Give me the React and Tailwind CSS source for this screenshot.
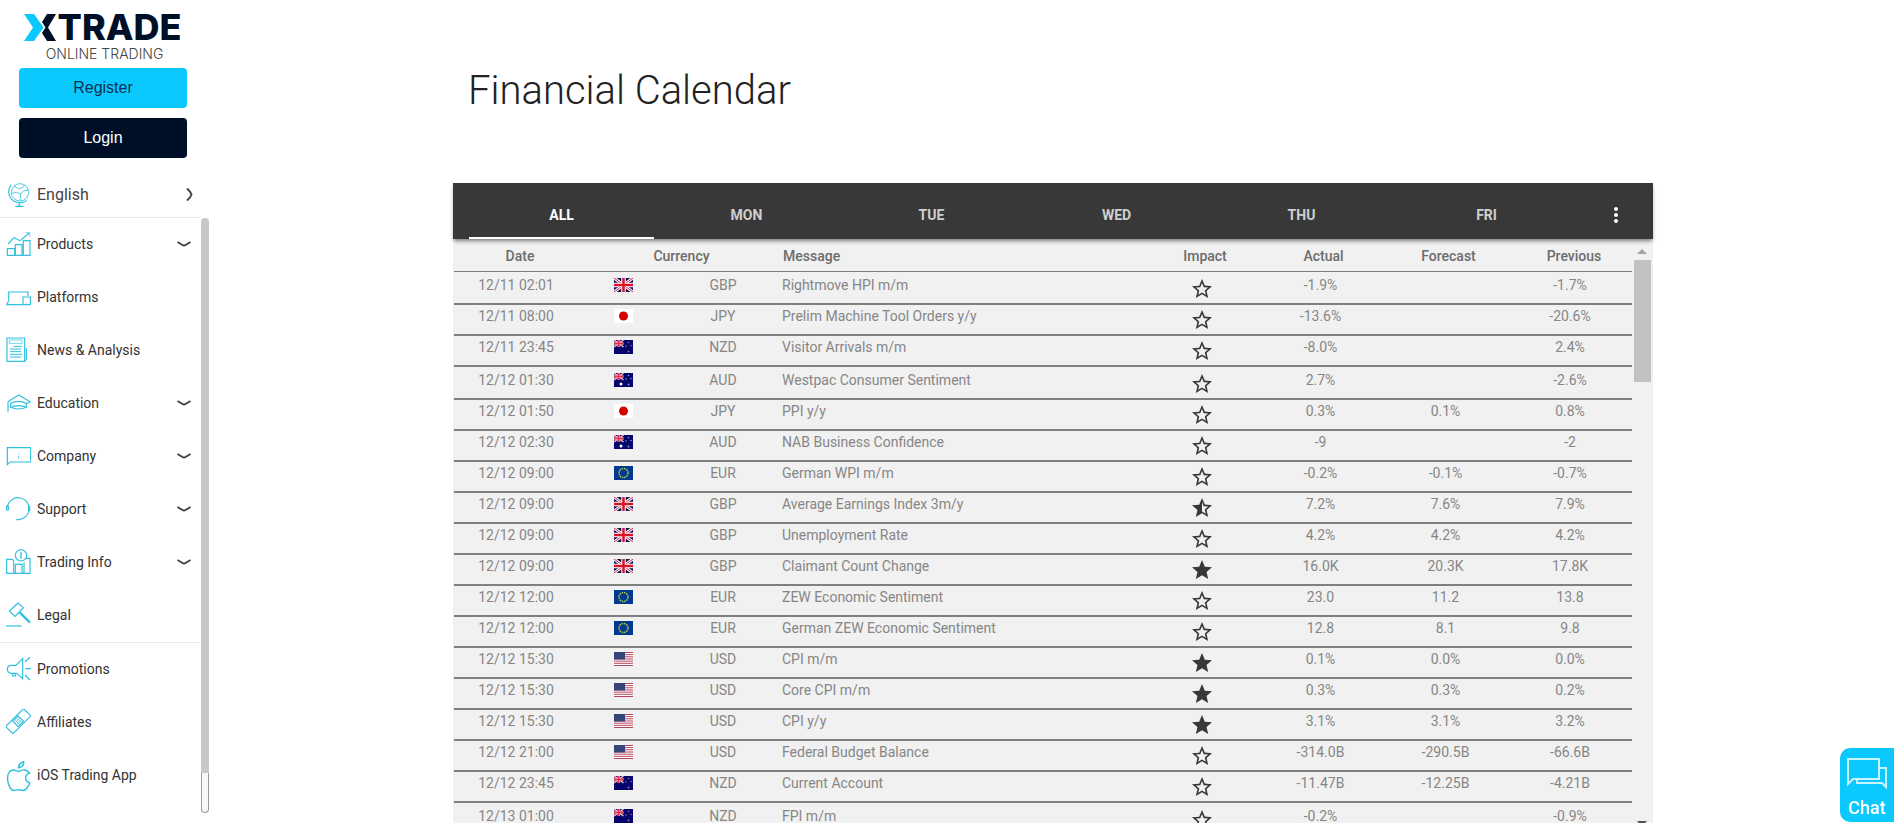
import { useState } from 'react';
import { MdStar, MdStarHalf, MdStarBorder, MdMoreVert } from 'react-icons/md';

const TABS = ['ALL', 'MON', 'TUE', 'WED', 'THU', 'FRI'];

const EVENTS = [
    { date: '12/11', time: '02:01', currency: 'GBP', message: 'Rightmove HPI m/m', impact: 1, actual: '-1.9%', forecast: '', previous: '-1.7%' },
    { date: '12/11', time: '08:00', currency: 'JPY', message: 'Prelim Machine Tool Orders y/y', impact: 1, actual: '-13.6%', forecast: '', previous: '-20.6%' },
    { date: '12/11', time: '23:45', currency: 'NZD', message: 'Visitor Arrivals m/m', impact: 1, actual: '-8.0%', forecast: '', previous: '2.4%' },
    { date: '12/12', time: '01:30', currency: 'AUD', message: 'Westpac Consumer Sentiment', impact: 1, actual: '2.7%', forecast: '', previous: '-2.6%' },
    { date: '12/12', time: '01:50', currency: 'JPY', message: 'PPI y/y', impact: 1, actual: '0.3%', forecast: '0.1%', previous: '0.8%' },
    { date: '12/12', time: '02:30', currency: 'AUD', message: 'NAB Business Confidence', impact: 1, actual: '-9', forecast: '', previous: '-2' },
    { date: '12/12', time: '09:00', currency: 'EUR', message: 'German WPI m/m', impact: 1, actual: '-0.2%', forecast: '-0.1%', previous: '-0.7%' },
    { date: '12/12', time: '09:00', currency: 'GBP', message: 'Average Earnings Index 3m/y', impact: 2, actual: '7.2%', forecast: '7.6%', previous: '7.9%' },
    { date: '12/12', time: '09:00', currency: 'GBP', message: 'Unemployment Rate', impact: 1, actual: '4.2%', forecast: '4.2%', previous: '4.2%' },
    { date: '12/12', time: '09:00', currency: 'GBP', message: 'Claimant Count Change', impact: 3, actual: '16.0K', forecast: '20.3K', previous: '17.8K' },
    { date: '12/12', time: '12:00', currency: 'EUR', message: 'ZEW Economic Sentiment', impact: 1, actual: '23.0', forecast: '11.2', previous: '13.8' },
    { date: '12/12', time: '12:00', currency: 'EUR', message: 'German ZEW Economic Sentiment', impact: 1, actual: '12.8', forecast: '8.1', previous: '9.8' },
    { date: '12/12', time: '15:30', currency: 'USD', message: 'CPI m/m', impact: 3, actual: '0.1%', forecast: '0.0%', previous: '0.0%' },
    { date: '12/12', time: '15:30', currency: 'USD', message: 'Core CPI m/m', impact: 3, actual: '0.3%', forecast: '0.3%', previous: '0.2%' },
    { date: '12/12', time: '15:30', currency: 'USD', message: 'CPI y/y', impact: 3, actual: '3.1%', forecast: '3.1%', previous: '3.2%' },
    { date: '12/12', time: '21:00', currency: 'USD', message: 'Federal Budget Balance', impact: 1, actual: '-314.0B', forecast: '-290.5B', previous: '-66.6B' },
    { date: '12/12', time: '23:45', currency: 'NZD', message: 'Current Account', impact: 1, actual: '-11.47B', forecast: '-12.25B', previous: '-4.21B' },
    { date: '12/13', time: '01:00', currency: 'NZD', message: 'FPI m/m', impact: 1, actual: '-0.2%', forecast: '', previous: '-0.9%' },
];

// Line icons share a 75 unit grid
const Icon = ({ children }) => (
    <svg viewBox="0 0 75 75" className="h-[25px] w-[25px] shrink-0" fill="none" stroke="#2fc0de" strokeWidth="3.5" aria-hidden="true">
        {children}
    </svg>
);

const ProductsIcon = () => (
    <Icon>
        <path d="M4 53h22v20H4zM28 41h20v32H28zM52 29h20v44H52z" />
        <path d="M6 39 24 20l18 9L70 6" />
        <path d="M58 5h13v11" strokeWidth="2" />
    </Icon>
);

const PlatformsIcon = () => (
    <Icon>
        <path d="M8 50V24h58v12" />
        <path d="M8 50 2 62h48" />
        <path d="M51 39h22v23H51zM58 61h8" />
    </Icon>
);

const NewsIcon = () => (
    <Icon>
        <path d="M3 3h53v70H3z" />
        <path d="M56 36h5v30l-5 7" />
        <path d="M10 9h38v10H10z" strokeWidth="2" />
        <path d="M22 28h26M12 36h34M12 44h34M12 52h36M12 60h34" strokeWidth="3" />
    </Icon>
);

const EducationIcon = () => (
    <Icon>
        <path d="m6 35 32-20 35 21-12 5" />
        <path d="M14 40q24-12 47 0v12q-23 10-47 0z" />
        <path d="M14 52q24-10 47 0" />
        <path d="M6 35v32" />
    </Icon>
);

const CompanyIcon = () => (
    <Icon>
        <path d="M4 14h70v43H12l-8 8z" />
        <path d="M38 30v4M38 38v10" strokeWidth="3" opacity="0.7" />
    </Icon>
);

const SupportIcon = () => (
    <Icon>
        <path d="M4 32a33 33 0 1 1 34 39h-7" />
        <path d="M2 31h5v11H2z" />
        <path d="M68 32h3v12h-3z" />
    </Icon>
);

const TradingInfoIcon = () => (
    <Icon>
        <circle cx="45" cy="19" r="17" />
        <path d="M45 9v20" strokeWidth="4" />
        <path d="M2 73V31h17l4 5v37zM28 73V46h20v27M54 73V40M60 28h12v45H2" />
    </Icon>
);

const LegalIcon = () => (
    <Icon>
        <path d="M10 27 36 3l16 14-25 26z" />
        <path d="m41 31 31 31" strokeWidth="7" />
        <path d="M0 72h47" />
    </Icon>
);

const PromotionsIcon = () => (
    <Icon>
        <path d="M50 7v61L32 52H14q-10-3-10-14 1-9 10-10h16z" />
        <path d="M20 52v8h8v-8" />
        <path d="m57 17 15-13M58 38h17M57 57l15 15" strokeWidth="4" />
    </Icon>
);

const AffiliatesIcon = () => (
    <Icon>
        <g transform="rotate(-45 37 37)">
            <rect x="-1" y="21" width="76" height="31" rx="3" />
            <rect x="25" y="25" width="23" height="23" />
            <path d="M33 25v23M41 25v23M25 33h23M25 41h23" strokeWidth="2" />
        </g>
    </Icon>
);

const AppleIcon = () => (
    <svg viewBox="3 1 17 21" className="mt-1 h-[31px] w-[25px] shrink-0" fill="none" stroke="#2fc0de" strokeWidth="1" aria-hidden="true">
        <path d="M8.286 7.008C5.07 7.008 4 10.238 4 12.928 4 16.157 6.143 21 8.286 21c1.165-.05 1.799-.538 3.214-.538 1.406 0 1.607.538 3.214.538S19 17.771 19 15.619c-.03-.011-2.649-.434-2.679-3.23-.02-2.335 2.589-3.179 2.679-3.228-1.096-1.606-3.162-2.113-3.75-2.153-1.535-.12-3.032 1.077-3.75 1.077-.729 0-2.036-1.077-3.214-1.077z" />
        <path d="M11.5 5.5q0-3 3.500-4 .3 3.600-3.500 4z" />
    </svg>
);

const GlobeIcon = () => (
    <Icon>
        <circle cx="42" cy="31" r="26" strokeWidth="2.5" />
        <path d="M16 8a33 33 0 0 0 46 47M40 65v8M28 73h24" />
        <path d="M24 12l14 8 12-3 6-9M18 34l14-3 12 6-2 19M66 24l-14 3-8 10" strokeWidth="2.5" />
    </Icon>
);

const MENU = [
    { label: 'Products', icon: ProductsIcon, expandable: true },
    { label: 'Platforms', icon: PlatformsIcon },
    { label: 'News & Analysis', icon: NewsIcon },
    { label: 'Education', icon: EducationIcon, expandable: true },
    { label: 'Company', icon: CompanyIcon, expandable: true },
    { label: 'Support', icon: SupportIcon, expandable: true },
    { label: 'Trading Info', icon: TradingInfoIcon, expandable: true },
    { label: 'Legal', icon: LegalIcon },
];

const EXTRA_MENU = [
    { label: 'Promotions', icon: PromotionsIcon },
    { label: 'Affiliates', icon: AffiliatesIcon },
    { label: 'iOS Trading App', icon: AppleIcon },
];

const UnionJack = () => (
    <>
        <path fill="#0b1560" d="M0 0h38v28H0z" />
        <path stroke="#fff" strokeWidth="6" d="m0 0 38 28M38 0 0 28" />
        <path stroke="#d8142c" strokeWidth="2" d="m0 0 38 28M38 0 0 28" />
        <path stroke="#fff" strokeWidth="9" d="M19 0v28M0 14h38" />
        <path stroke="#d8142c" strokeWidth="5" d="M19 0v28M0 14h38" />
    </>
);

const SouthernFlag = ({ starColor, children }) => (
    <>
        <path fill="#05056e" d="M0 0h38v28H0z" />
        <path stroke="#f3b6c0" strokeWidth="3" d="m0 0 19 14M19 0 0 14" />
        <path stroke="#f3b6c0" strokeWidth="5" d="M9.500 0v14M0 7h19" />
        <path stroke="#e0304a" strokeWidth="3" d="M9.500 0v14M0 7h19" />
        <g fill={starColor}>
            <circle cx="29" cy="5" r="1.500" />
            <circle cx="24" cy="12" r="1.500" />
            <circle cx="34" cy="11" r="1.500" />
            <circle cx="29" cy="23" r="1.800" />
        </g>
        {children}
    </>
);

const FLAGS = {
    GBP: <UnionJack />,
    JPY: (
        <>
            <path fill="#fff" d="M0 0h38v28H0z" />
            <circle cx="19" cy="14" r="9" fill="#d90000" />
        </>
    ),
    NZD: <SouthernFlag starColor="#b06a9c" />,
    AUD: (
        <SouthernFlag starColor="#9aa0d8">
            <circle cx="14" cy="22" r="3" fill="#fff" />
        </SouthernFlag>
    ),
    EUR: (
        <>
            <path fill="#003a8f" d="M0 0h38v28H0z" />
            <circle cx="19" cy="14" r="9" fill="none" stroke="#b5c95a" strokeWidth="3" strokeDasharray="3 1.700" />
        </>
    ),
    USD: (
        <>
            <path fill="#fff" d="M0 0h38v28H0z" />
            <path stroke="#b8455c" strokeWidth="2" d="M0 1h38M0 5.300h38M0 9.600h38M0 14h38M0 18.300h38M0 22.600h38M0 27h38" />
            <path fill="#35457a" d="M0 0h22v15H0z" />
        </>
    ),
};

const Flag = ({ currency }) => (
    <svg viewBox="0 0 38 28" className="mx-auto h-3.5 w-[19px]" preserveAspectRatio="none" fill="none" aria-hidden="true">
        {FLAGS[currency]}
    </svg>
);

const Impact = ({ level }) => {
    const Star = level === 3 ? MdStar : level === 2 ? MdStarHalf : MdStarBorder;
    return <Star className="mx-auto -mt-px mb-px size-6 text-[#383838]" aria-label={`Impact ${level} of 3`} />;
};

const MenuItem = ({ item }) => (
    <li>
        <a href="#" className="flex h-[53px] items-center gap-1.5 pr-2.5 pb-0.5 pl-1.5 text-sm text-[#333]">
            <item.icon />
            <span className="flex-1">{item.label}</span>
            {item.expandable && (
                <svg viewBox="0 0 14 6" className="h-1.5 w-3.5" fill="none" stroke="#444" strokeWidth="2" aria-hidden="true">
                    <path d="M.5 1 5.500 4Q7 5 8.500 4L13.500 1" />
                </svg>
            )}
        </a>
    </li>
);

const Logo = () => (
    <a href="#" className="flex flex-col items-center text-[#000f28]">
        <span className="flex items-center gap-px">
            <svg viewBox="0 0 33 27" className="h-[27px] w-[33px]" aria-hidden="true">
                <path fill="#0bc8ff" d="M0 0h10l9.500 13.500L10 27H0l9-13.500z" />
                <path fill="#000f28" d="M23 0h9l-8 13.500L32 27h-9l-5-8 3.500-5.500L18 8z" />
            </svg>
            <span className="font-[Inter] text-4xl leading-7 font-extrabold">TRADE</span>
        </span>
        <span className="mt-[5px] pl-1 font-[Inter] text-sm leading-4 font-light text-[#444]">ONLINE TRADING</span>
    </a>
);

const Sidebar = () => (
    <aside className="w-[212px] shrink-0">
        <div className="w-[201px] border-b border-[#e8e8e8] pt-[13px]">
            <div className="pl-1">
                <Logo />
            </div>
            <div className="flex flex-col gap-2.5 pt-1.5 pr-3.5 pl-[19px] font-['Liberation_Sans',sans-serif] text-base">
                <button type="button" className="h-10 rounded bg-[#0bc8ff] text-[#0c3350]">Register</button>
                <button type="button" className="h-10 rounded bg-[#000f28] text-white">Login</button>
            </div>
            <button type="button" className="mt-3.5 flex h-[45px] w-full items-center gap-1.5 pr-2 pl-1.5 text-left text-base text-[#444]">
                <GlobeIcon />
                <span className="flex-1">English</span>
                <svg viewBox="0 0 7 13" className="h-[13px] w-[7px]" fill="none" stroke="#444" strokeWidth="2" aria-hidden="true">
                    <path d="M1 .5q3.500 3 4.500 6-1 3-4.500 6" />
                </svg>
            </button>
        </div>
        <div className="flex">
            <nav className="w-[201px]">
                <ul className="border-b border-[#ececec]">
                    {MENU.map(item => <MenuItem key={item.label} item={item} />)}
                </ul>
                <ul>
                    {EXTRA_MENU.map(item => <MenuItem key={item.label} item={item} />)}
                </ul>
            </nav>
            <div className="flex h-[595px] w-2 flex-col">
                <div className="flex-1 rounded-t bg-[#c8c8c8]" />
                <div className="h-10 rounded-b-sm border border-t-0 border-[#999] bg-[#f8f8f8]" />
            </div>
        </div>
    </aside>
);

const EventsTable = () => (
    <table className="flex-1 table-fixed border-separate border-spacing-0 text-center text-sm leading-3.5 text-[#868686]">
        <colgroup>
            <col className="w-[124px]" />
            <col className="w-[91px]" />
            <col className="w-[108px]" />
            <col />
            <col className="w-[112px]" />
            <col className="w-[125px]" />
            <col className="w-[125px]" />
            <col className="w-[124px]" />
        </colgroup>
        <thead>
            <tr className="h-[33px] text-[#6c6c6c] *:border-b *:border-[#808080] *:pt-0.5 *:font-medium">
                <th className="pl-2">Date</th>
                <th className="pl-2" colSpan={2}>Currency</th>
                <th className="pl-1.5 text-left">Message</th>
                <th className="pl-1.5">Impact</th>
                <th className="pl-1.5">Actual</th>
                <th className="pl-1.5">Forecast</th>
                <th className="pl-2">Previous</th>
            </tr>
        </thead>
        <tbody>
            {EVENTS.map((event, i) => {
                const newDay = i === 0 || EVENTS[i - 1].date !== event.date;
                return (
                    <tr
                        key={i}
                        className={`*:border-b-2 *:border-[#808080] *:pb-px *:align-top ${newDay ? '*:pt-1.5' : '*:pt-1'}`}
                    >
                        <td>{event.date} {event.time}</td>
                        <td><Flag currency={event.currency} /></td>
                        <td>{event.currency}</td>
                        <td className="pl-[5px] text-left">{event.message}</td>
                        <td><Impact level={event.impact} /></td>
                        <td>{event.actual}</td>
                        <td>{event.forecast}</td>
                        <td>{event.previous}</td>
                    </tr>
                );
            })}
        </tbody>
    </table>
);

const Scrollbar = () => (
    <div className="flex w-5 flex-col items-center pt-2.5">
        <svg viewBox="0 0 10 5" className="h-[5px] w-2.5" aria-hidden="true">
            <path fill="#a3a3a3" d="M5 0l5 5H0z" />
        </svg>
        <div className="mt-1.5 h-[122px] w-[17px] bg-[#c1c1c1]" />
        <div className="flex-1" />
        <svg viewBox="0 0 10 5" className="mb-px h-[5px] w-2.5" aria-hidden="true">
            <path fill="#505050" d="M0 0h10L5 5z" />
        </svg>
    </div>
);

const App = () => {
    const [activeTab, setActiveTab] = useState('ALL');

    return (
        <div className="flex h-screen overflow-hidden bg-white font-[Roboto,sans-serif]">
            <Sidebar />

            <main className="flex-1">
                <div className="mx-auto max-w-[1200px] pt-[67px]">
                    <h1 className="mb-[68px] pl-[15px] text-[40px] leading-12 font-light text-[#222]">Financial Calendar</h1>

                    <section className="bg-[#f1f1f1]">
                        <div className="relative flex items-end bg-[#383838] pt-2 pl-4 shadow-[0_3px_4px_-1px_rgba(0,0,0,0.5)]">
                            {TABS.map(tab => (
                                <button
                                    key={tab}
                                    type="button"
                                    onClick={() => setActiveTab(tab)}
                                    className={`h-12 flex-1 border-y-2 border-transparent text-sm font-bold ${activeTab === tab ? 'border-b-white text-white' : 'text-[#cfcfcf]'}`}
                                >
                                    {tab}
                                </button>
                            ))}
                            <button type="button" aria-label="More" className="flex h-12 w-[74px] items-center justify-center text-white">
                                <MdMoreVert className="size-6" />
                            </button>
                        </div>

                        <div className="flex h-[588px] overflow-hidden px-px">
                            <EventsTable />
                            <Scrollbar />
                        </div>
                    </section>
                </div>
            </main>

            <button
                type="button"
                className="fixed right-0 bottom-px flex h-[74px] w-[54px] flex-col items-center rounded-l-[10px] bg-[#0bc8ff] pt-2 text-lg leading-6 font-medium text-white"
            >
                <svg viewBox="0 0 42 34" className="mb-1.5 h-[34px] w-[42px]" fill="none" stroke="#c9f3ff" strokeWidth="2" aria-hidden="true">
                    <path d="M2 3h31v20H7l-5 5z" />
                    <path d="M33 12h7v19l-4-4H11v-4" />
                </svg>
                Chat
            </button>
        </div>
    );
};

export default App;
